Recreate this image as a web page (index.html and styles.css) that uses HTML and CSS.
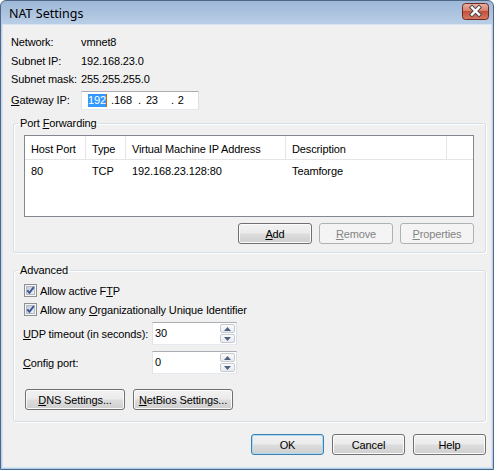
FILE: index.html
```html
<!DOCTYPE html>
<html>
<head>
<meta charset="utf-8">
<title>NAT Settings</title>
<link rel="stylesheet" href="styles.css">
</head>
<body>
<div class="window">
  <div class="titlebar">
    <span class="title">NAT Settings</span>
    <span class="close">
      <svg width="27" height="17" viewBox="0 0 27 17">
        <defs>
          <linearGradient id="cg" x1="0" y1="0" x2="0" y2="1">
            <stop offset="0" stop-color="#eab2a4"/>
            <stop offset="0.45" stop-color="#d8826e"/>
            <stop offset="0.5" stop-color="#c4503a"/>
            <stop offset="1" stop-color="#d67a64"/>
          </linearGradient>
        </defs>
        <rect x="0.5" y="0.5" width="26" height="16" rx="3" fill="url(#cg)" stroke="#6e2a20"/>
        <path d="M10 4.5 L17 11.5 M17 4.5 L10 11.5" stroke="#4a4a4a" stroke-width="4.4" stroke-linecap="square"/>
        <path d="M10 4.5 L17 11.5 M17 4.5 L10 11.5" stroke="#ffffff" stroke-width="2.4" stroke-linecap="square"/>
      </svg>
    </span>
  </div>
  <div class="client">
    <div class="info">
      <div class="info-row"><span class="info-label">Network:</span><span>vmnet8</span></div>
      <div class="info-row r2"><span class="info-label">Subnet IP:</span><span>192.168.23.0</span></div>
      <div class="info-row r3"><span class="info-label">Subnet mask:</span><span>255.255.255.0</span></div>
      <div class="info-row gw">
        <span class="info-label"><u>G</u>ateway IP:</span>
        <div class="ipbox">
          <span class="ip-sel">192</span><span class="caret"></span><span class="ip-a">.168</span><span class="ip-b">.</span><span class="ip-c">23</span><span class="ip-d">.</span><span class="ip-e">2</span>
        </div>
      </div>
    </div>

    <fieldset class="group pf">
      <legend>Port <u>F</u>orwarding</legend>
      <div class="listview">
        <div class="lv-head">
          <div class="lv-cell c1">Host Port</div>
          <div class="lv-cell c2">Type</div>
          <div class="lv-cell c3">Virtual Machine IP Address</div>
          <div class="lv-cell c4">Description</div>
          <div class="lv-cell c5"></div>
        </div>
        <div class="lv-row">
          <div class="lv-cell c1">80</div>
          <div class="lv-cell c2">TCP</div>
          <div class="lv-cell c3">192.168.23.128:80</div>
          <div class="lv-cell c4">Teamforge</div>
        </div>
      </div>
      <div class="btn-row">
        <button class="btn"><u>A</u>dd</button>
        <button class="btn" disabled><u>R</u>emove</button>
        <button class="btn" disabled><u>P</u>roperties</button>
      </div>
    </fieldset>

    <fieldset class="group adv">
      <legend>Advanced</legend>
      <label class="check">
        <svg class="cb" width="13" height="13" viewBox="0 0 13 13">
          <defs>
            <linearGradient id="cbg" x1="0" y1="0" x2="1" y2="1">
              <stop offset="0" stop-color="#c3cad6"/>
              <stop offset="1" stop-color="#eef1f6"/>
            </linearGradient>
          </defs>
          <rect x="0.5" y="0.5" width="12" height="12" fill="#f6f6f6" stroke="#8e8f8f"/>
          <rect x="2.5" y="2.5" width="8" height="8" fill="url(#cbg)" stroke="#b4bac4"/>
          <path d="M3.3 6.3 L5.4 8.8 L9.8 3.2" fill="none" stroke="#3d5496" stroke-width="1.9"/>
        </svg>
        <span>Allow active F<u>T</u>P</span>
      </label>
      <label class="check">
        <svg class="cb" width="13" height="13" viewBox="0 0 13 13">
          <rect x="0.5" y="0.5" width="12" height="12" fill="#f6f6f6" stroke="#8e8f8f"/>
          <rect x="2.5" y="2.5" width="8" height="8" fill="url(#cbg)" stroke="#b4bac4"/>
          <path d="M3.3 6.3 L5.4 8.8 L9.8 3.2" fill="none" stroke="#3d5496" stroke-width="1.9"/>
        </svg>
        <span>Allow any <u>O</u>rganizationally Unique Identifier</span>
      </label>

      <div class="field-row udp">
        <span class="field-label"><u>U</u>DP timeout (in seconds):</span>
        <div class="spin">
          <span class="spin-value">30</span>
          <span class="spin-btns">
            <span class="spin-btn"><svg width="7" height="4" viewBox="0 0 7 4"><path d="M0 4 L3.5 0 L7 4 Z" fill="#4d6185"/></svg></span>
            <span class="spin-btn"><svg width="7" height="4" viewBox="0 0 7 4"><path d="M0 0 L3.5 4 L7 0 Z" fill="#4d6185"/></svg></span>
          </span>
        </div>
      </div>
      <div class="field-row cfg">
        <span class="field-label"><u>C</u>onfig port:</span>
        <div class="spin">
          <span class="spin-value">0</span>
          <span class="spin-btns">
            <span class="spin-btn"><svg width="7" height="4" viewBox="0 0 7 4"><path d="M0 4 L3.5 0 L7 4 Z" fill="#4d6185"/></svg></span>
            <span class="spin-btn"><svg width="7" height="4" viewBox="0 0 7 4"><path d="M0 0 L3.5 4 L7 0 Z" fill="#4d6185"/></svg></span>
          </span>
        </div>
      </div>

      <div class="adv-btns">
        <button class="btn wide"><u>D</u>NS Settings...</button>
        <button class="btn wide"><u>N</u>etBios Settings...</button>
      </div>
    </fieldset>

    <div class="dlg-btns">
      <button class="btn default">OK</button>
      <button class="btn">Cancel</button>
      <button class="btn">Help</button>
    </div>
  </div>
</div>
</body>
</html>
```

FILE: styles.css
```css
* { box-sizing: border-box; }

html, body {
  margin: 0;
  padding: 0;
  background: #ffffff;
}

body {
  font-family: "Liberation Sans", Arial, sans-serif;
  font-size: 11px;
  letter-spacing: -0.12px;
  color: #000;
}

u { text-decoration: underline; text-underline-offset: 1px; }

.window {
  width: 494px;
  height: 470px;
  display: flex;
  flex-direction: column;
  border: 1px solid #4f6686;
  border-radius: 6px 6px 0 0;
  background: linear-gradient(#9db8d8, #bbcfe7 24px, #c4d6ec 60px, #c4d6ec 440px, #a8d2ee);
  padding: 0 2px 2px 2px;
}

.titlebar {
  height: 24px;
  flex: none;
  display: flex;
  align-items: center;
  justify-content: space-between;
  padding: 0 2px 0 6px;
}

.title {
  font-family: "Noto Sans", "Open Sans", sans-serif;
  font-size: 12.5px;
  letter-spacing: 0;
  color: #000;
  margin-top: 1px;
}

.close {
  display: flex;
  margin-top: -3px;
}

.client {
  flex: 1;
  background: #f0f0f0;
  display: flex;
  flex-direction: column;
  box-shadow: 0 0 0 1px #d7e3f1;
}

/* info rows */
.info {
  padding: 8px 0 0 8px;
}

.info-row {
  height: 18px;
  display: flex;
  align-items: center;
}

.info-row.r2 { margin-top: 1px; }
.info-row.gw { margin-top: 3px; height: 18px; }

.info-label {
  width: 70px;
  flex: none;
  white-space: nowrap;
}

.ipbox {
  width: 118px;
  height: 19px;
  background: #fff;
  border: 1px solid;
  border-color: #abadb3 #dbdfe6 #e3e9ef #e2e3ea;
  display: flex;
  align-items: center;
  padding-left: 6px;
  line-height: 13px;
}

.ip-sel {
  background: #3399ff;
  color: #fff;
}

.caret {
  width: 1px;
  height: 13px;
  background: #cc6a00;
}

.ip-a { margin-left: 4px; }
.ip-b { margin-left: 6px; }
.ip-c { margin-left: 5px; }
.ip-d { margin-left: 13px; }
.ip-e { margin-left: 4px; }

/* group boxes */
.group {
  margin: 0 5px 0 10px;
  border: 1px solid #d5dfe5;
  border-radius: 3px;
  min-width: 0;
  box-shadow: inset 1px 1px 0 #ffffff, 1px 1px 0 #ffffff;
}

.group legend {
  padding: 0 2px;
  line-height: 14px;
  margin-left: -6px;
}

.pf {
  margin-top: 7px;
  padding: 5px 11px 8px 10px;
}

.adv {
  margin-top: 10px;
  padding: 5px 11px 11px 10px;
}

/* list view */
.listview {
  width: 450px;
  height: 82px;
  background: #fff;
  border: 1px solid #828790;
}

.lv-head {
  display: flex;
  height: 24px;
  border-bottom: 1px solid #e5e5e5;
}

.lv-head .lv-cell {
  border-right: 1px solid #e3e5e8;
  padding-top: 2px;
}

.lv-head .c5 {
  flex: 1;
  border-right: none;
}

.lv-row {
  display: flex;
  height: 17px;
  margin-top: 2px;
}

.lv-cell {
  display: flex;
  align-items: center;
  padding-left: 6px;
  white-space: nowrap;
}

.c1 { width: 61px; }
.c2 { width: 40px; }
.c3 { width: 160px; }
.c4 { width: 161px; }

/* buttons */
.btn {
  height: 21px;
  width: 74px;
  padding: 0;
  font-family: inherit;
  font-size: 11px;
  letter-spacing: -0.12px;
  color: #000;
  border: 1px solid #707070;
  border-radius: 3px;
  background: linear-gradient(#f2f2f2 0%, #ebebeb 48%, #dddddd 52%, #cfcfcf 100%);
  box-shadow: inset 0 0 0 1px #fbfbfb;
}

.btn:disabled {
  border-color: #adb2b5;
  background: #f4f4f4;
  color: #838383;
  box-shadow: none;
}

.btn.default {
  border-color: #3c7fb1;
  box-shadow: inset 0 0 0 1px #a6ddf5;
}

.btn-row {
  width: 450px;
  display: flex;
  justify-content: flex-end;
  gap: 7px;
  margin-top: 6px;
}

/* advanced */
.check {
  display: flex;
  align-items: center;
  height: 17px;
  margin-bottom: 2px;
}

.cb {
  flex: none;
  margin-right: 3px;
}

.field-row {
  display: flex;
  align-items: center;
  height: 23px;
}

.field-row.udp { margin-top: 4px; }
.field-row.cfg { margin-top: 6px; }

.field-label {
  width: 129px;
  flex: none;
  margin-left: -1px;
  white-space: nowrap;
}

.spin {
  width: 85px;
  height: 23px;
  background: #fff;
  border: 1px solid;
  border-color: #abadb3 #dbdfe6 #e3e9ef #e2e3ea;
  display: flex;
  align-items: stretch;
  padding: 1px;
}

.spin-value {
  flex: 1;
  display: flex;
  align-items: center;
  padding-left: 1px;
  padding-bottom: 1px;
}

.spin-btns {
  width: 15px;
  display: flex;
  flex-direction: column;
  gap: 1px;
}

.spin-btn {
  flex: 1;
  display: flex;
  align-items: center;
  justify-content: center;
  border: 1px solid #c4cad2;
  border-radius: 2px;
  background: linear-gradient(#fbfbfb, #e8eaec);
}

.adv-btns {
  display: flex;
  gap: 8px;
  margin-top: 15px;
  padding-left: 1px;
}

.btn.wide { width: 100px; }

.dlg-btns {
  display: flex;
  justify-content: flex-end;
  gap: 8px;
  margin: 12px 5px 0 0;
}

.dlg-btns .btn { width: 73px; }
```
